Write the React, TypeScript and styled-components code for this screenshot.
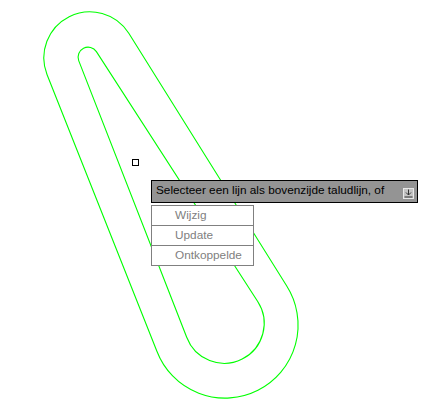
import React from 'react';
import styled, { createGlobalStyle } from 'styled-components';

const outerPath =
  'M128.8 33.3 L286.6 285.8 A73 73 0 1 1 156.9 351.2 L47 74.5 A46 46 0 0 1 128.8 33.3 Z';
const innerPath =
  'M96.4 51.6 L257.7 301.5 A40 40 0 1 1 186.7 337.3 L78.7 60.6 A10 10 0 0 1 96.4 51.6 Z';

const menuItems = ['Wijzig', 'Update', 'Ontkoppelde'];

const App = () => {
  return (
    <>
      <GlobalStyle />
      <Canvas>
        <Drawing width={434} height={416} viewBox="0 0 434 416">
          <path d={outerPath} fill="none" stroke="#00ff00" strokeWidth={1.1} />
          <path d={innerPath} fill="none" stroke="#00ff00" strokeWidth={1.1} />
        </Drawing>
        <PickBox />
        <Prompt>
          <CommandBar>
            <CommandText>Selecteer een lijn als bovenzijde taludlijn, of</CommandText>
            <DownButton>
              <svg width={9} height={9} viewBox="0 0 9 9">
                <path d="M4.5 0.5V6M2 3.5L4.5 6L7 3.5M0.5 8H8.5" fill="none" stroke="#333" strokeWidth={1} />
              </svg>
            </DownButton>
          </CommandBar>
          <Menu>
            {menuItems.map((item) => (
              <MenuItem key={item}>{item}</MenuItem>
            ))}
          </Menu>
        </Prompt>
      </Canvas>
    </>
  );
};

const GlobalStyle = createGlobalStyle`
  html, body {
    margin: 0;
    padding: 0;
    background: #ffffff;
  }
`;

const Canvas = styled.div`
  position: relative;
  width: 434px;
  height: 416px;
  overflow: hidden;
  background: #ffffff;
  font-family: "Liberation Sans", Arial, sans-serif;
`;

const Drawing = styled.svg`
  position: absolute;
  top: 0;
  left: 0;
`;

const PickBox = styled.div`
  position: absolute;
  left: 132px;
  top: 159px;
  width: 5px;
  height: 5px;
  border: 1px solid #000000;
`;

const Prompt = styled.div`
  position: absolute;
  left: 151px;
  top: 180px;
  display: flex;
  flex-direction: column;
  gap: 2px;
`;

const CommandBar = styled.div`
  box-sizing: border-box;
  display: flex;
  align-items: center;
  justify-content: space-between;
  width: 267px;
  height: 23px;
  padding: 0 3px 0 4px;
  background: #949494;
  border: 1px solid #000000;
`;

const CommandText = styled.span`
  font-size: 11.8px;
  line-height: 18px;
  margin-top: -3px;
  color: #000000;
  white-space: nowrap;
`;

const DownButton = styled.div`
  box-sizing: border-box;
  display: flex;
  align-items: center;
  justify-content: center;
  width: 11px;
  height: 11px;
  margin-top: 3px;
  background: #c4c4c4;
  border: 1px solid #e8e8e8;
`;

const Menu = styled.div`
  box-sizing: border-box;
  display: flex;
  flex-direction: column;
  width: 103px;
  background: #ffffff;
  border: 1px solid #808080;
`;

const MenuItem = styled.div`
  box-sizing: border-box;
  height: 20px;
  padding-left: 23px;
  font-size: 11.8px;
  line-height: 18px;
  color: #808080;
  white-space: nowrap;
  &:not(:first-child) {
    border-top: 1px solid #808080;
  }
  &:first-child {
    height: 19px;
  }
`;

export default App;
